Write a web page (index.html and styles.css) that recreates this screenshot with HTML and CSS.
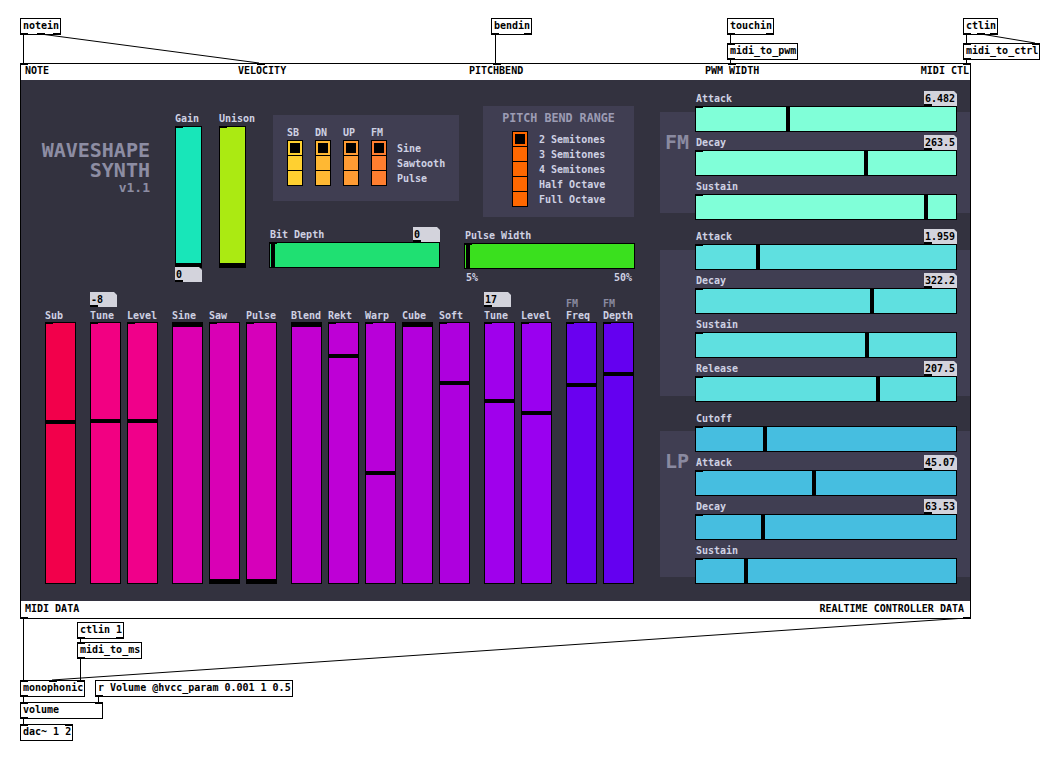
FILE: index.html
```html
<!DOCTYPE html>
<html lang="en">
<head>
<meta charset="utf-8">
<title>waveshape synth</title>
<link rel="stylesheet" href="styles.css">
</head>
<body>
<main class="patch">
  <svg class="wires" width="1063" height="759" viewBox="0 0 1063 759">
    <g stroke="#000" stroke-width="1" fill="none">
      <line x1="23.5" y1="34" x2="23.5" y2="63"/>
      <line x1="40.5" y1="34" x2="259" y2="63"/>
      <line x1="495.5" y1="34" x2="495.5" y2="63"/>
      <line x1="730.5" y1="34" x2="730.5" y2="43"/>
      <line x1="730.5" y1="59" x2="730.5" y2="63"/>
      <line x1="966.5" y1="34" x2="966.5" y2="43"/>
      <line x1="981" y1="34" x2="1035" y2="43"/>
      <line x1="966.5" y1="59" x2="966.5" y2="63"/>
      <line x1="23.5" y1="618" x2="23.5" y2="680"/>
      <line x1="966" y1="618" x2="52" y2="680"/>
      <line x1="80.5" y1="637" x2="80.5" y2="642"/>
      <line x1="80.5" y1="658" x2="80.5" y2="680"/>
      <line x1="23.5" y1="697" x2="23.5" y2="702"/>
      <line x1="98.5" y1="697" x2="98.5" y2="702"/>
      <line x1="23.5" y1="718" x2="23.5" y2="724"/>
    </g>
  </svg>

  <div class="obj o-notein">notein<i class="io b l"></i><i class="io b m"></i><i class="io b r"></i></div>
  <div class="obj o-bendin">bendin<i class="io b l"></i><i class="io b r"></i></div>
  <div class="obj o-touchin">touchin<i class="io b l"></i><i class="io b r"></i></div>
  <div class="obj o-m2pwm">midi_to_pwm<i class="io t l"></i><i class="io b l"></i></div>
  <div class="obj o-ctlin">ctlin<i class="io b l"></i><i class="io b m"></i><i class="io b r"></i></div>
  <div class="obj o-m2ctrl">midi_to_ctrl<i class="io t l"></i><i class="io t r"></i><i class="io b l"></i></div>

  <div class="gop">
    <i class="io t gi0"></i><i class="io t gi1"></i><i class="io t gi2"></i><i class="io t gi3"></i><i class="io t gi4"></i>
    <i class="io b l"></i><i class="io b r"></i>
    <div class="gop-head">
      <span class="h-note">NOTE</span>
      <span class="h-vel">VELOCITY</span>
      <span class="h-pb">PITCHBEND</span>
      <span class="h-pwm">PWM WIDTH</span>
      <span class="h-ctl">MIDI CTL</span>
    </div>

    <div class="stage">
      <div class="left">
        <div class="top">
          <div class="title">
            <div class="tl">WAVESHAPE</div>
            <div class="tl">SYNTH</div>
            <div class="ver">v1.1</div>
          </div>

          <div class="mixer">
            <div class="mcol">
              <div class="flab">Gain</div>
              <div class="vsl mvs c-gain"><i class="knob bot"></i></div>
              <div class="num w27 under">0</div>
            </div>
            <div class="mcol">
              <div class="flab">Unison</div>
              <div class="vsl mvs c-unison"><i class="knob bot"></i></div>
            </div>
          </div>

          <div class="mid">
            <div class="wpanel">
              <div class="wcol">
                <div class="wlab">SB</div>
                <div class="radio c-sb"><i class="sel"></i><i></i><i></i></div>
              </div>
              <div class="wcol">
                <div class="wlab">DN</div>
                <div class="radio c-dn"><i class="sel"></i><i></i><i></i></div>
              </div>
              <div class="wcol">
                <div class="wlab">UP</div>
                <div class="radio c-up"><i class="sel"></i><i></i><i></i></div>
              </div>
              <div class="wcol last">
                <div class="wlab">FM</div>
                <div class="radio c-fmr"><i class="sel"></i><i></i><i></i></div>
              </div>
              <div class="opts wopts">
                <div>Sine</div>
                <div>Sawtooth</div>
                <div>Pulse</div>
              </div>
            </div>
            <div class="hblk bit">
              <div class="hlab"><span>Bit Depth</span><span class="num w27">0</span></div>
              <div class="hsl wide c-bit" style="--p:1px"><i class="knob"></i></div>
            </div>
          </div>

          <div class="pcol">
            <div class="ppanel">
              <div class="ptitle">PITCH BEND RANGE</div>
              <div class="pbody">
                <div class="radio c-pb"><i class="sel"></i><i></i><i></i><i></i><i></i></div>
                <div class="opts popts">
                  <div>2 Semitones</div>
                  <div>3 Semitones</div>
                  <div>4 Semitones</div>
                  <div>Half Octave</div>
                  <div>Full Octave</div>
                </div>
              </div>
            </div>
            <div class="hblk pulse">
              <div class="hlab"><span>Pulse Width</span></div>
              <div class="hsl wide c-pw" style="--p:1px"><i class="knob"></i></div>
              <div class="scale"><span>5%</span><span>50%</span></div>
            </div>
          </div>
        </div>

        <div class="faders">
          <div class="fgroup">
            <div class="fader"><div class="ftop"></div><div class="flab">Sub</div><div class="vsl fvs c-sub" style="--p:97px"><i class="knob"></i></div></div>
          </div>
          <div class="fgroup">
            <div class="fader"><div class="ftop"><div class="num w27">-8</div></div><div class="flab">Tune</div><div class="vsl fvs c-tune" style="--p:96px"><i class="knob"></i></div></div>
            <div class="fader"><div class="ftop"></div><div class="flab">Level</div><div class="vsl fvs c-level" style="--p:96px"><i class="knob"></i></div></div>
          </div>
          <div class="fgroup">
            <div class="fader"><div class="ftop"></div><div class="flab">Sine</div><div class="vsl fvs c-sine" style="--p:0px"><i class="knob"></i></div></div>
            <div class="fader"><div class="ftop"></div><div class="flab">Saw</div><div class="vsl fvs c-saw"><i class="knob bot"></i></div></div>
            <div class="fader"><div class="ftop"></div><div class="flab">Pulse</div><div class="vsl fvs c-pulse"><i class="knob bot"></i></div></div>
          </div>
          <div class="fgroup">
            <div class="fader"><div class="ftop"></div><div class="flab">Blend</div><div class="vsl fvs c-blend" style="--p:0px"><i class="knob"></i></div></div>
            <div class="fader"><div class="ftop"></div><div class="flab">Rekt</div><div class="vsl fvs c-rekt" style="--p:31px"><i class="knob"></i></div></div>
            <div class="fader"><div class="ftop"></div><div class="flab">Warp</div><div class="vsl fvs c-warp" style="--p:148px"><i class="knob"></i></div></div>
            <div class="fader"><div class="ftop"></div><div class="flab">Cube</div><div class="vsl fvs c-cube" style="--p:0px"><i class="knob"></i></div></div>
            <div class="fader"><div class="ftop"></div><div class="flab">Soft</div><div class="vsl fvs c-soft" style="--p:58px"><i class="knob"></i></div></div>
          </div>
          <div class="fgroup">
            <div class="fader"><div class="ftop"><div class="num w27">17</div></div><div class="flab">Tune</div><div class="vsl fvs c-tune2" style="--p:76px"><i class="knob"></i></div></div>
            <div class="fader"><div class="ftop"></div><div class="flab">Level</div><div class="vsl fvs c-level2" style="--p:88px"><i class="knob"></i></div></div>
          </div>
          <div class="fgroup">
            <div class="fader"><div class="ftop"><div class="fm">FM</div></div><div class="flab">Freq</div><div class="vsl fvs c-ffreq" style="--p:60px"><i class="knob"></i></div></div>
            <div class="fader"><div class="ftop"><div class="fm">FM</div></div><div class="flab">Depth</div><div class="vsl fvs c-fdepth" style="--p:49px"><i class="knob"></i></div></div>
          </div>
        </div>
      </div>

      <div class="right">
        <section class="env env-fm">
          <div class="side">FM</div>
          <div class="rows">
            <div class="hrow"><div class="hlab"><span>Attack</span><span class="num w33">6.482</span></div><div class="hsl env-sl c-fm" style="--p:90px"><i class="knob"></i></div></div>
            <div class="hrow"><div class="hlab"><span>Decay</span><span class="num w33">263.5</span></div><div class="hsl env-sl c-fm" style="--p:168px"><i class="knob"></i></div></div>
            <div class="hrow"><div class="hlab"><span>Sustain</span></div><div class="hsl env-sl c-fm" style="--p:228px"><i class="knob"></i></div></div>
          </div>
        </section>
        <section class="env env-amp">
          <div class="side"></div>
          <div class="rows">
            <div class="hrow"><div class="hlab"><span>Attack</span><span class="num w33">1.959</span></div><div class="hsl env-sl c-amp" style="--p:60px"><i class="knob"></i></div></div>
            <div class="hrow"><div class="hlab"><span>Decay</span><span class="num w33">322.2</span></div><div class="hsl env-sl c-amp" style="--p:174px"><i class="knob"></i></div></div>
            <div class="hrow"><div class="hlab"><span>Sustain</span></div><div class="hsl env-sl c-amp" style="--p:169px"><i class="knob"></i></div></div>
            <div class="hrow"><div class="hlab"><span>Release</span><span class="num w33">207.5</span></div><div class="hsl env-sl c-amp" style="--p:180px"><i class="knob"></i></div></div>
          </div>
        </section>
        <section class="env env-lp">
          <div class="side">LP</div>
          <div class="rows">
            <div class="hrow"><div class="hlab"><span>Cutoff</span></div><div class="hsl env-sl c-lp" style="--p:67px"><i class="knob"></i></div></div>
            <div class="hrow"><div class="hlab"><span>Attack</span><span class="num w33">45.07</span></div><div class="hsl env-sl c-lp" style="--p:116px"><i class="knob"></i></div></div>
            <div class="hrow"><div class="hlab"><span>Decay</span><span class="num w33">63.53</span></div><div class="hsl env-sl c-lp" style="--p:65px"><i class="knob"></i></div></div>
            <div class="hrow"><div class="hlab"><span>Sustain</span></div><div class="hsl env-sl c-lp" style="--p:48px"><i class="knob"></i></div></div>
          </div>
        </section>
      </div>
    </div>

    <div class="gop-foot">
      <span>MIDI DATA</span>
      <span>REALTIME CONTROLLER DATA</span>
    </div>
  </div>

  <div class="obj o-ctlin1">ctlin 1<i class="io b l"></i><i class="io b r"></i></div>
  <div class="obj o-m2ms">midi_to_ms<i class="io t l"></i><i class="io b l"></i></div>
  <div class="obj o-mono">monophonic<i class="io t l"></i><i class="io t m"></i><i class="io t r"></i><i class="io b l"></i></div>
  <div class="obj o-rvol">r Volume @hvcc_param 0.001 1 0.5<i class="io b l"></i></div>
  <div class="obj o-volume">volume<i class="io t l"></i><i class="io t r"></i><i class="io b l"></i></div>
  <div class="obj o-dac">dac~ 1 2<i class="io t l"></i><i class="io t r"></i></div>
</main>
</body>
</html>
```

FILE: styles.css
```css
* { box-sizing: border-box; }
html, body { margin: 0; padding: 0; background: #fff; }
body {
  width: 1063px;
  height: 759px;
  overflow: hidden;
  font-family: "DejaVu Sans Mono", "Liberation Mono", monospace;
}
.patch { position: relative; width: 1063px; height: 759px; }
.wires { position: absolute; left: 0; top: 0; }

/* ---------- pd object boxes ---------- */
.obj {
  position: absolute;
  height: 17px;
  border: 1px solid #000;
  background: #fff;
  padding: 0 1px 0 2px;
  font: bold 10px/14px "DejaVu Sans Mono", monospace;
  color: #000;
  white-space: pre;
}
.io { position: absolute; width: 8px; height: 2px; background: #000; }
.io.t { top: -1px; }
.io.b { bottom: -1px; }
.io.l { left: -1px; }
.io.r { right: -1px; }
.io.m { left: calc(50% - 4px); }

.o-notein { left: 20px; top: 18px; }
.o-bendin { left: 491px; top: 18px; }
.o-touchin { left: 727px; top: 18px; }
.o-m2pwm { left: 727px; top: 43px; }
.o-ctlin { left: 963px; top: 18px; }
.o-m2ctrl { left: 963px; top: 43px; }
.o-ctlin1 { left: 77px; top: 622px; }
.o-m2ms { left: 77px; top: 642px; }
.o-mono { left: 20px; top: 680px; }
.o-rvol { left: 95px; top: 680px; }
.o-volume { left: 20px; top: 702px; width: 83px; }
.o-dac { left: 20px; top: 724px; }

/* ---------- graph on parent ---------- */
.gop {
  position: absolute;
  left: 20px;
  top: 63px;
  width: 951px;
  height: 556px;
  border: 1px solid #000;
  background: #fff;
  display: flex;
  flex-direction: column;
}
.gop > .io { z-index: 2; }
.gi0 { left: -1px; }
.gi1 { left: calc((100% - 6px) * 0.25); }
.gi2 { left: calc((100% - 6px) * 0.5); }
.gi3 { left: calc((100% - 6px) * 0.75); }
.gi4 { right: -1px; }

.gop-head {
  height: 16px;
  display: flex;
  padding-left: 4px;
  font: bold 10px/13px "DejaVu Sans Mono", monospace;
  color: #000;
  white-space: pre;
}
.h-note { width: 213px; }
.h-vel { width: 231px; }
.h-pb { width: 236px; }
.h-ctl { margin-left: auto; padding-right: 1px; }

.gop-foot {
  height: 17px;
  display: flex;
  justify-content: space-between;
  padding: 0 6px 0 4px;
  font: bold 10px/16px "DejaVu Sans Mono", monospace;
  color: #000;
}

.stage {
  height: 521px;
  background: #33323f;
  display: flex;
  gap: 5px;
  color: #cfd1e3;
  font: bold 10px/12px "DejaVu Sans Mono", monospace;
}
.left { width: 634px; flex: none; display: flex; flex-direction: column; }
.top { height: 210px; display: flex; align-items: flex-start; flex: none; }

/* title */
.title {
  width: 129px;
  flex: none;
  margin-top: 60px;
  text-align: right;
  color: #8d8da3;
  font-weight: bold;
}
.title .tl { font-size: 20px; line-height: 20px; height: 20px; }
.title .ver { font-size: 13px; line-height: 14px; margin-top: 1px; }

/* sliders */
.vsl, .hsl { position: relative; border: 1px solid #000; flex: none; }
.vsl::before, .hsl::before {
  content: "";
  position: absolute;
  left: -1px;
  top: -1px;
  width: 8px;
  height: 2px;
  background: #000;
}
.knob { position: absolute; background: #000; }
.vsl .knob { left: 0; right: 0; height: 4px; top: var(--p); }
.vsl .knob.bot { top: auto; bottom: 0; }
.hsl .knob { top: 0; bottom: 0; width: 4px; left: var(--p); }

/* number boxes */
.num {
  position: relative;
  display: block;
  flex: none;
  height: 15px;
  background: #d3d3dc;
  color: #000;
  font: bold 10px/15px "DejaVu Sans Mono", monospace;
  padding-left: 1px;
  clip-path: polygon(0 0, calc(100% - 3px) 0, 100% 3px, 100% 100%, 0 100%);
}
.num::after {
  content: "";
  position: absolute;
  left: 0;
  bottom: 0;
  width: 8px;
  height: 2px;
  background: #000;
}
.w27 { width: 27px; }
.w33 { width: 33px; }

/* mixer */
.mixer { display: flex; gap: 17px; margin: 33px 0 0 25px; flex: none; }
.mcol { width: 27px; display: flex; flex-direction: column; }
.mcol .flab { margin-bottom: 1px; }
.mvs { width: 27px; height: 142px; }
.under { margin-top: -1px; }
.flab { height: 12px; line-height: 12px; white-space: pre; }

/* waveform panel */
.mid { width: 190px; margin-left: 23px; flex: none; display: flex; flex-direction: column; }
.wpanel {
  width: 186px;
  height: 86px;
  margin: 35px 0 0 4px;
  padding: 12px 0 0 14px;
  background: #403e52;
  display: flex;
  flex: none;
}
.wcol { width: 16px; margin-right: 12px; }
.wcol.last { margin-right: 10px; }
.wlab { height: 12px; line-height: 12px; margin-bottom: 1px; }
.radio {
  width: 16px;
  border: 1px solid #000;
  border-bottom: 0;
  display: flex;
  flex-direction: column;
}
.radio i { position: relative; height: 15px; border-bottom: 1px solid #000; }
.radio i.sel::after {
  content: "";
  position: absolute;
  left: 2px;
  top: 2px;
  width: 10px;
  height: 10px;
  background: #000;
}
.opts div { height: 15px; line-height: 15px; white-space: pre; }
.wopts { margin-top: 14px; }

.hblk { flex: none; }
.bit { width: 171px; margin-top: 26px; }
.hlab {
  display: flex;
  justify-content: space-between;
  align-items: flex-start;
  height: 15px;
  line-height: 15px;
  padding-left: 1px;
  white-space: pre;
}
.hsl.wide { width: 171px; height: 26px; }

/* pitch bend */
.pcol { width: 171px; margin-left: 5px; flex: none; display: flex; flex-direction: column; }
.ppanel {
  width: 151px;
  height: 111px;
  margin: 26px 0 0 19px;
  padding-top: 5px;
  background: #403e52;
  flex: none;
}
.ptitle {
  font: bold 11.7px/14px "DejaVu Sans Mono", monospace;
  color: #9c9cb4;
  text-align: center;
  white-space: pre;
}
.pbody { display: flex; margin: 6px 0 0 29px; }
.popts { margin: 1px 0 0 11px; }
.pulse { margin-top: 11px; }
.scale {
  display: flex;
  justify-content: space-between;
  padding: 0 3px 0 2px;
  margin-top: 3px;
  line-height: 12px;
}

/* faders */
.faders { display: flex; gap: 14px; margin-left: 24px; }
.fgroup { display: flex; gap: 6px; }
.fader { width: 31px; display: flex; flex-direction: column; }
.ftop { height: 20px; display: flex; flex-direction: column; }
.ftop .num { margin-top: 2px; }
.ftop .fm { padding-top: 8px; line-height: 12px; color: #8a8aa0; }
.fvs { width: 31px; height: 262px; }

/* right side envelopes */
.right { width: 310px; flex: none; display: flex; flex-direction: column; }
.env { position: relative; z-index: 0; display: flex; flex: none; }
.env::before {
  content: "";
  position: absolute;
  left: 0;
  right: 0;
  background: #403e52;
  z-index: -1;
}
.env-fm { margin-top: 11px; }
.env-fm::before { top: 21px; height: 101px; }
.env-amp { margin-top: 9px; }
.env-amp::before { top: 21px; height: 146px; }
.env-lp { margin-top: 9px; }
.env-lp::before { top: 20px; height: 146px; }
.side {
  width: 35px;
  flex: none;
  padding-left: 5px;
  font: bold 20px/20px "DejaVu Sans Mono", monospace;
  color: #8a8aa0;
}
.env-fm .side { padding-top: 41px; }
.env-lp .side { padding-top: 40px; }
.rows { width: 262px; display: flex; flex-direction: column; gap: 3px; }
.env-sl { width: 262px; height: 26px; }

/* colours */
.c-gain { background: #18e6b9; }
.c-unison { background: #abea12; }
.c-bit { background: #1fe072; }
.c-pw { background: #3ae01e; }
.c-sb i { background: #ffd030; }
.c-dn i { background: #ffb833; }
.c-up i { background: #ff9b33; }
.c-fmr i { background: #ff7e2f; }
.c-pb i { background: #ff6800; }
.c-sub { background: #f2004b; }
.c-tune { background: #f20082; }
.c-level { background: #f0008a; }
.c-sine { background: #dc00b0; }
.c-saw { background: #d900b5; }
.c-pulse { background: #d600ba; }
.c-blend { background: #c200d0; }
.c-rekt { background: #be00d6; }
.c-warp { background: #b800d9; }
.c-cube { background: #b300dc; }
.c-soft { background: #ae00de; }
.c-tune2 { background: #a000ec; }
.c-level2 { background: #9a00f0; }
.c-ffreq { background: #6a00f0; }
.c-fdepth { background: #6400f0; }
.c-fm { background: #80ffd8; }
.c-amp { background: #5fe0e0; }
.c-lp { background: #46bee0; }
```
